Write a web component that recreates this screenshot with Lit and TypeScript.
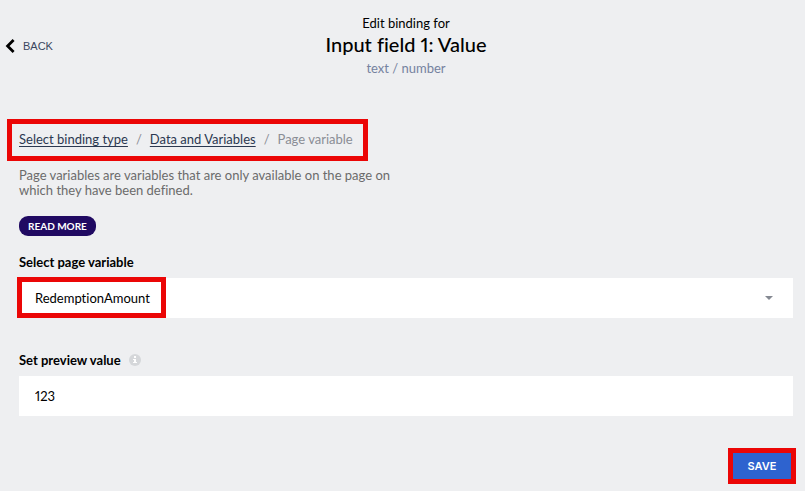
import { LitElement, html, css } from "lit";
import { customElement, state } from "lit/decorators.js";

@customElement("app-root")
export class AppRoot extends LitElement {
  static styles = css`
    :host {
      display: block;
      min-height: 100vh;
      box-sizing: border-box;
      padding: 15px 12px 8px 19px;
      background: #eeeff1;
      color: #000;
      font-family: Lato, "Liberation Sans", sans-serif;
      font-size: 13px;
      line-height: 16px;
      font-variant-ligatures: none;
      font-variant-numeric: proportional-nums;
    }
    *, *::before, *::after { box-sizing: border-box; }
    button, input, select {
      font: inherit;
      font-variant-ligatures: none;
      font-variant-numeric: proportional-nums;
      color: inherit;
      margin: 0;
      border: 0;
      border-radius: 0;
    }
    button { cursor: pointer; }
    .header {
      display: grid;
      grid-template-columns: 1fr auto 1fr;
      align-items: center;
      margin-bottom: 46px;
    }
    .back {
      justify-self: start;
      display: flex;
      align-items: center;
      gap: 8px;
      margin-left: -14px;
      padding: 0 0 2px;
      background: none;
      color: #3a4660;
      font-family: "Liberation Sans", sans-serif;
      font-size: 11px;
    }
    .heading { text-align: center; }
    .heading p, .heading h1 { margin: 0; }
    .heading h1 { font-size: 20px; font-weight: 500; line-height: 27px; }
    .heading .types { color: #75829f; line-height: 20px; }
    .marked { position: relative; }
    .marked::after {
      content: "";
      position: absolute;
      inset: -5px;
      border: 5px solid #eb0606;
      pointer-events: none;
    }
    .crumbs {
      width: fit-content;
      display: flex;
      gap: 8px;
      margin-left: -7px;
      padding: 7px 10px 9px 7px;
      color: #8a8d95;
    }
    .crumbs a { color: #2b3850; text-underline-offset: 2px; }
    .intro {
      max-width: 400px;
      margin: 12px 0 18px;
      color: #6b6b6b;
      line-height: 15px;
    }
    .more {
      display: block;
      height: 20px;
      padding: 0 9px;
      border-radius: 9px;
      background: #200a62;
      color: #fff;
      font-size: 10px;
      font-weight: 700;
    }
    .label {
      display: flex;
      align-items: center;
      gap: 8px;
      margin-bottom: 8px;
      font-weight: 700;
    }
    .first { margin-top: 18px; }
    .second { margin-top: 34px; }
    .field { position: relative; }
    .field select, .field input {
      display: block;
      width: 100%;
      height: 40px;
      padding: 0 16px;
      background: #fff;
      appearance: none;
    }
    .arrow { position: absolute; right: 20px; top: 18px; }
    .ring {
      position: absolute;
      left: -2px;
      top: -1px;
      width: 149px;
      height: 41px;
      border: 5px solid #eb0606;
      pointer-events: none;
    }
    .actions { display: flex; justify-content: flex-end; margin: 37px 2px 0 0; }
    .save {
      min-width: 58px;
      height: 26px;
      padding: 0 14px;
      background: #2e63cf;
      color: #fff;
      font-family: Inter, "Liberation Sans", sans-serif;
      font-size: 11px;
      font-weight: 600;
    }
  `;

  @state() private preview = "123";

  render() {
    return html`
      <header class="header">
        <button class="back" type="button">
          <svg width="10" height="14" viewBox="0 0 10 14" fill="none" stroke="#000" stroke-width="2.8" aria-hidden="true">
            <path d="M8.6 1 L2.6 7 L8.6 13" />
          </svg>
          BACK
        </button>
        <div class="heading">
          <p>Edit binding for</p>
          <h1>Input field 1: Value</h1>
          <p class="types">text / number</p>
        </div>
      </header>
      <nav class="crumbs marked" aria-label="Breadcrumb">
        <a href="#type">Select binding type</a><span>/</span>
        <a href="#data">Data and Variables</a><span>/</span>
        <span aria-current="page">Page variable</span>
      </nav>
      <p class="intro">Page variables are variables that are only available on the page on which they have been defined.</p>
      <button class="more" type="button">READ MORE</button>

      <label class="label first" for="variable">Select page variable</label>
      <div class="field">
        <select id="variable"><option>RedemptionAmount</option></select>
        <svg class="arrow" width="8" height="4" viewBox="0 0 8 4" aria-hidden="true"><path d="M0 0H8L4 4Z" fill="#858992" /></svg>
        <span class="ring"></span>
      </div>

      <div class="label second">
        <label for="preview">Set preview value</label>
        <svg width="12" height="12" viewBox="0 0 12 12" aria-hidden="true">
          <circle cx="6" cy="6" r="6" fill="#d5d7da" />
          <path d="M5 2H7V4H5ZM4 5H7V8H8V9H4V8H5V6H4Z" fill="#fff" />
        </svg>
      </div>
      <div class="field">
        <input id="preview" type="text" .value=${this.preview}
          @input=${(e: Event) => { this.preview = (e.target as HTMLInputElement).value; }} />
      </div>

      <div class="actions">
        <button class="save marked" type="button">SAVE</button>
      </div>
    `;
  }
}
